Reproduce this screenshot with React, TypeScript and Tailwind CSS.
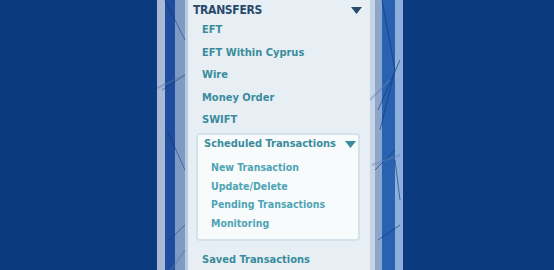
import React from "react";

const font = { fontFamily: '"DejaVu Sans Condensed", "DejaVu Sans", Verdana, sans-serif' };

function Arrow({ className }: { className?: string }) {
  return (
    <svg width="11" height="7" viewBox="0 0 11 7" className={className}>
      <polygon points="0,0 11,0 5.5,7" fill="currentColor" />
    </svg>
  );
}

export default function App() {
  const items = ["EFT", "EFT Within Cyprus", "Wire", "Money Order", "SWIFT"];
  const subs = ["New Transaction", "Update/Delete", "Pending Transactions", "Monitoring"];
  return (
    <div className="flex h-[270px] w-[554px] overflow-hidden bg-[#0a3a80]" style={font}>
      <div className="w-[157px] shrink-0" />
      {/* left frame */}
      <div className="relative flex shrink-0">
        <div className="w-[8px] bg-[#a7b9d4]" />
        <div className="w-[10px] bg-[#1d4d9c]" />
        <div className="w-[10px] bg-[#7f9ac4]" />
        <div className="w-[3px] bg-[#bccbe0]" />
        <svg className="absolute inset-0" width="31" height="270" viewBox="0 0 31 270">
          <g stroke="#0f3577" strokeWidth="1" fill="none" opacity="0.5">
            <line x1="8" y1="0" x2="28" y2="40" />
            <line x1="5" y1="90" x2="28" y2="75" />
            <line x1="10" y1="130" x2="28" y2="170" />
            <line x1="12" y1="240" x2="28" y2="225" />
          </g>
          <g stroke="#5c78a8" strokeWidth="2" fill="none" opacity="0.4">
            <line x1="0" y1="88" x2="28" y2="75" />
            <line x1="14" y1="270" x2="28" y2="250" />
          </g>
        </svg>
      </div>
      {/* panel */}
      <div className="flex w-[182px] shrink-0 flex-col bg-[#e7eff5]">
        <div className="flex h-[19px] items-center justify-between pl-[5px] pr-[8px] pt-[1px]">
          <span className="text-[12px] font-bold tracking-[-0.3px] text-[#284a6c]">TRANSFERS</span>
          <Arrow className="text-[#284a6c]" />
        </div>
        <div className="flex flex-col pl-[14px]">
          {items.map((t) => (
            <div key={t} className="flex h-[22.5px] items-center text-[11px] font-bold text-[#3a8c9b]">
              {t}
            </div>
          ))}
        </div>
        <div className="ml-[8px] mr-[10px] mt-[1px] h-[109px] rounded-[4px] border-2 border-[#d3e3e9] bg-[#f8fbfc] pl-[6px] pr-[2px]">
          <div className="flex h-[20px] items-center justify-between">
            <span className="text-[11px] font-bold text-[#3a8c9b]">Scheduled Transactions</span>
            <Arrow className="text-[#3a8c9b]" />
          </div>
          <div className="mt-[4px] flex flex-col pl-[7px]">
            {subs.map((t) => (
              <div key={t} className="flex h-[18.7px] items-center text-[10.5px] font-bold text-[#4fa4b4]">
                {t}
              </div>
            ))}
          </div>
        </div>
        <div className="mt-[9px] flex h-[20px] items-center pl-[14px] text-[11px] font-bold text-[#3a8c9b]">
          Saved Transactions
        </div>
      </div>
      {/* right frame */}
      <div className="relative flex shrink-0">
        <div className="w-[5px] bg-[#c6d4e6]" />
        <div className="w-[7px] bg-[#8da7cc]" />
        <div className="w-[13px] bg-[#2862b0]" />
        <div className="w-[8px] bg-[#8eaedb]" />
        <svg className="absolute inset-0" width="33" height="270" viewBox="0 0 33 270">
          <g stroke="#0f3577" strokeWidth="1" fill="none" opacity="0.6">
            <line x1="12" y1="0" x2="25" y2="70" />
            <line x1="25" y1="70" x2="10" y2="130" />
            <line x1="8" y1="110" x2="30" y2="60" />
            <line x1="5" y1="170" x2="25" y2="150" />
            <line x1="25" y1="160" x2="30" y2="200" />
            <line x1="8" y1="240" x2="30" y2="225" />
          </g>
          <g stroke="#6a80aa" strokeWidth="2" fill="none" opacity="0.4">
            <line x1="0" y1="100" x2="20" y2="80" />
            <line x1="2" y1="165" x2="30" y2="155" />
          </g>
        </svg>
      </div>
      <div className="flex-1" />
    </div>
  );
}
